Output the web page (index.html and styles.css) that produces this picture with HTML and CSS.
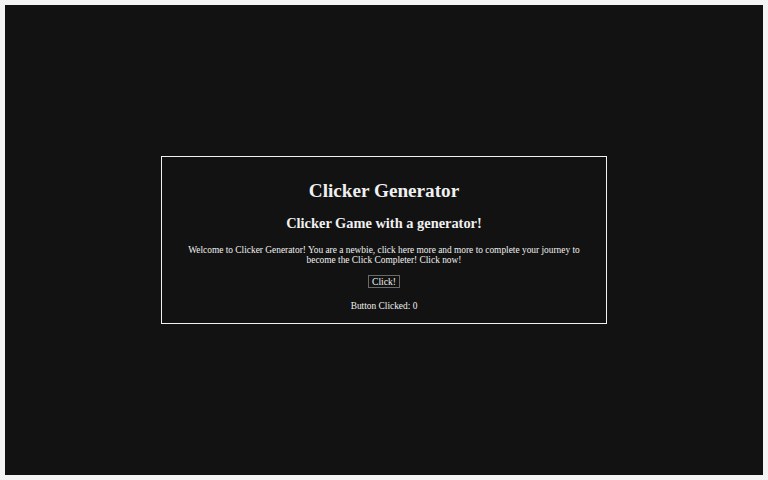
FILE: index.html
```html
<!DOCTYPE html>
<html lang="en">
<head>
    <meta charset="UTF-8">
    <meta name="viewport" content="width=device-width, initial-scale=1.0">
    <title>Clicker Generator</title>
    <link rel="stylesheet" href="styles.css">
</head>
<body>
    <div class="screen">
        <div class="game">
            <h1>Clicker Generator</h1>
            <h2>Clicker Game with a generator!</h2>
            <p>Welcome to Clicker Generator! You are a newbie, click here more and more to complete your journey to become the Click Completer! Click now!</p>
            <button type="button" id="click-button">Click!</button>
            <p id="counter">Button Clicked: <span id="count">0</span></p>
        </div>
    </div>

    <script>
        let clicks = 0;
        const button = document.getElementById("click-button");

        button.addEventListener("click", function () {
          // Soma um clique e atualiza o contador
          clicks++;
          document.getElementById("count").textContent = clicks;
        });
    </script>
</body>
</html>
```

FILE: styles.css
```css
html {
    background-color: #f4f4f4;
}

body {
    margin: 5px;
    font-family: "Liberation Serif", "Times New Roman", serif;
    font-size: 9.6px;
    color: #f0f0f0;
}

.screen {
    height: 470px;
    background-color: #121212;
    display: flex;
    align-items: center;
    justify-content: center;
}

.game {
    width: 404px;
    padding: 11px 20px 3px;
    border: 1px solid #f0f0f0;
    text-align: center;
}

.game h1 {
    font-size: 2em;
    margin: 0.67em 0;
}

.game h2 {
    font-size: 1.5em;
    margin: 0.83em 0 13px;
}

.game p {
    font-size: 9.4px;
    margin: 9.6px 0;
}

button {
    font-family: inherit;
    font-size: 9.6px;
    color: #f0f0f0;
    background-color: #121212;
    border: 1px solid #6a6a6a;
    padding: 0 3px;
    margin-top: 0;
}

.game #counter {
    margin-top: 13px;
}
```
